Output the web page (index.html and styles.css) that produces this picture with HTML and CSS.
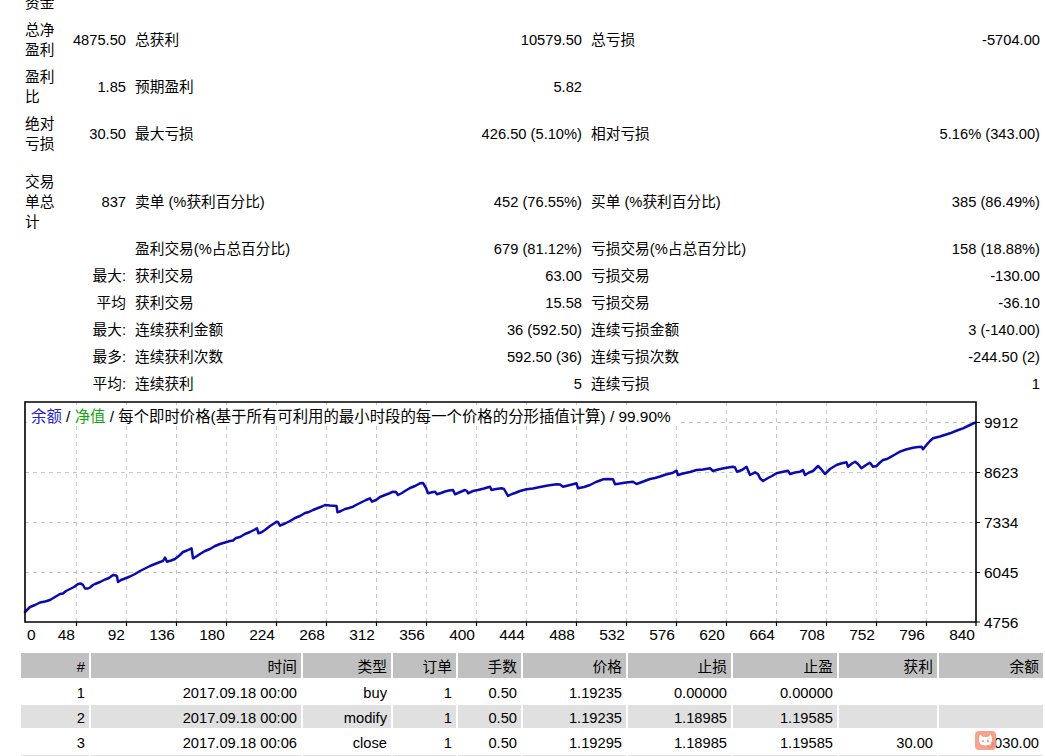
FILE: index.html
```html
<!DOCTYPE html>
<html lang="zh-CN">
<head>
<meta charset="utf-8">
<title>Strategy Tester Report</title>
<link rel="stylesheet" href="styles.css">
</head>
<body>
<table class="stats">
  <colgroup><col class="c1"><col class="c2"><col class="c3"><col class="c4"><col class="c5"><col class="c6"></colgroup>
  <tr><td>初始资金</td><td class="num">5000.00</td><td class="lbl"></td><td class="num"></td><td class="lbl"></td><td class="num"></td></tr>
  <tr><td>总净盈利</td><td class="num">4875.50</td><td class="lbl">总获利</td><td class="num">10579.50</td><td class="lbl">总亏损</td><td class="num">-5704.00</td></tr>
  <tr><td>盈利比</td><td class="num">1.85</td><td class="lbl">预期盈利</td><td class="num">5.82</td><td class="lbl"></td><td class="num"></td></tr>
  <tr><td>绝对亏损</td><td class="num">30.50</td><td class="lbl">最大亏损</td><td class="num">426.50 (5.10%)</td><td class="lbl">相对亏损</td><td class="num">5.16% (343.00)</td></tr>
  <tr class="spacer"><td colspan="6"></td></tr>
  <tr><td>交易单总计</td><td class="num">837</td><td class="lbl">卖单 (%获利百分比)</td><td class="num">452 (76.55%)</td><td class="lbl">买单 (%获利百分比)</td><td class="num">385 (86.49%)</td></tr>
  <tr><td></td><td class="num"></td><td class="lbl">盈利交易(%占总百分比)</td><td class="num">679 (81.12%)</td><td class="lbl">亏损交易(%占总百分比)</td><td class="num">158 (18.88%)</td></tr>
  <tr><td></td><td class="num">最大:</td><td class="lbl">获利交易</td><td class="num">63.00</td><td class="lbl">亏损交易</td><td class="num">-130.00</td></tr>
  <tr><td></td><td class="num">平均</td><td class="lbl">获利交易</td><td class="num">15.58</td><td class="lbl">亏损交易</td><td class="num">-36.10</td></tr>
  <tr><td></td><td class="num">最大:</td><td class="lbl">连续获利金额</td><td class="num">36 (592.50)</td><td class="lbl">连续亏损金额</td><td class="num">3 (-140.00)</td></tr>
  <tr><td></td><td class="num">最多:</td><td class="lbl">连续获利次数</td><td class="num">592.50 (36)</td><td class="lbl">连续亏损次数</td><td class="num">-244.50 (2)</td></tr>
  <tr><td></td><td class="num">平均:</td><td class="lbl">连续获利</td><td class="num">5</td><td class="lbl">连续亏损</td><td class="num">1</td></tr>
</table>

<svg class="chart" width="1024" height="254" viewBox="21 397 1024 254" xmlns="http://www.w3.org/2000/svg">
  <g class="grid">
    <path d="M76.5 402V622M126.5 402V622M176.5 402V622M226.5 402V622M276.5 402V622M326.5 402V622M376.5 402V622M426.5 402V622M476.5 402V622M526.5 402V622M576.5 402V622M626.5 402V622M676.5 402V622M726.5 402V622M776.5 402V622M826.5 402V622M876.5 402V622M926.5 402V622"/>
    <path d="M25 422.5H976M25 472.5H976M25 522.5H976M25 572.5H976"/>
  </g>
  <rect class="title-bg" x="27" y="405" width="650" height="19"/>
  <text class="title" x="31" y="422"><tspan class="t-bal">余额</tspan> / <tspan class="t-eq">净值</tspan> / 每个即时价格(基于所有可利用的最小时段的每一个价格的分形插值计算) / 99.90%</text>
  <polyline class="curve" points="25,612 28,609 30,607 35,605 40,602.5 45,601.5 50,600 55,597 60,594 63,593.5 66,591 70,589 74,587 78,584 81,583.5 83,585 85,588.5 88,588.5 90,587.5 93,585 95,584 100,582 105,579.5 109,578 113,575 116,575.5 117,576.5 118,582 121,580 125,578.5 130,576.5 135,574 140,571 145,568.5 150,566 155,564 160,562 163,561 165,557.5 167,561.7 171,560.5 175,559 180,555 183,552 187,550.5 191.5,548.3 193,558.3 197,556 200,554 205,551 210,549 215,546 220,544 225,542.5 230,541 233,540.5 236,538 240,537 245,534 250,532 254,530 257,528.3 258.5,533.3 262,532 265,530 270,526 274,523.5 276.5,521.7 278,522 280,525.7 285,523.5 290,521 295,518 300,516 305,513 309,512 313,510 318,508 322,506.5 325,505 330,505.5 336.5,506 337.5,512.3 341,511 345,509 349,508 353,506.7 358,504 362,502 366,500 370,498.3 372,501.7 376,500 380,497 385,495 389,493.5 393,491.7 396,492 398,495 402,493 405,491 410,488 415,486 420,483.3 423,483 426,488 428,493.3 431,492.5 435,491.7 437,494.3 441,493 445,491.5 449,490.5 453,490 455,494.3 459,492.5 465,490 467,491 468,493.3 473,491 478,490 484,488.5 490,486.7 491.5,490 496,489 501.5,488.3 504,489 508,496 512,494 515,493 520,491 526.5,489.3 533,488.5 540,487 548,485.5 556.5,484.3 560,484.5 563,486.7 568,485.5 572,484.5 576.5,483.3 578,488.3 584,487 590,485 596,482 600,480.5 603,479.3 608,479 613,479.3 615,484.3 620,483.5 626,482.5 633,481.7 636.5,484 642,482 650,479 655,478 660,476.5 666,474.5 673,472.7 676.5,470.7 678,475 683,473.5 690,472 696.5,470 703,469.5 710,468.3 713,471 718,469.5 725,468 733,466.7 735,467.5 737,471.7 742,470 746.5,466.7 750,475 755,472.3 758,474 760,478.3 763,481 768,478 772,476 776.5,473.3 782,472 788,470.7 790,474 795,472.5 800,471.7 803,470 805,475 809,472.5 813,471 816,468 818,466 821,469 825,474 830,469 836.5,465 841,463.5 846.5,462.3 848,466.7 852,463.5 855,461.7 858,464 861.5,468.3 866,465 870,462.7 873,466.7 876.5,466 880,462.5 883,460 887,459 890,457.3 895,454.5 900,451.7 906,449.5 913,447.7 918,447 921.5,446.7 923,449.3 926.5,445 930,441 933,438.3 940,436.5 950,433.3 957,430.5 963,428.3 970,425 975,422.7"/>
  <path class="frame" d="M25 402H976V622H25Z"/>
  <path class="ticks" d="M76.5 622V626M126.5 622V626M176.5 622V626M226.5 622V626M276.5 622V626M326.5 622V626M376.5 622V626M426.5 622V626M476.5 622V626M526.5 622V626M576.5 622V626M626.5 622V626M676.5 622V626M726.5 622V626M776.5 622V626M826.5 622V626M876.5 622V626M926.5 622V626M976 622V626M976 422.5H980M976 472.5H980M976 522.5H980M976 572.5H980M976 622H980"/>
  <g class="axis">
    <text x="984" y="428">9912</text>
    <text x="984" y="478">8623</text>
    <text x="984" y="528">7334</text>
    <text x="984" y="578">6045</text>
    <text x="984" y="628">4756</text>
  </g>
  <g class="axis xaxis">
    <text x="27" y="640" class="start">0</text>
    <text x="75" y="640">48</text>
    <text x="125" y="640">92</text>
    <text x="175" y="640">136</text>
    <text x="225" y="640">180</text>
    <text x="275" y="640">224</text>
    <text x="325" y="640">268</text>
    <text x="375" y="640">312</text>
    <text x="425" y="640">356</text>
    <text x="475" y="640">400</text>
    <text x="525" y="640">444</text>
    <text x="575" y="640">488</text>
    <text x="625" y="640">532</text>
    <text x="675" y="640">576</text>
    <text x="725" y="640">620</text>
    <text x="775" y="640">664</text>
    <text x="825" y="640">708</text>
    <text x="875" y="640">752</text>
    <text x="925" y="640">796</text>
    <text x="975" y="640">840</text>
  </g>
</svg>

<table class="trades">
  <colgroup>
    <col class="w1"><col class="w2"><col class="w3"><col class="w4"><col class="w4"><col class="w6"><col class="w6"><col class="w8"><col class="w9"><col class="w10">
  </colgroup>
  <tr class="head"><td>#</td><td>时间</td><td>类型</td><td>订单</td><td>手数</td><td>价格</td><td>止损</td><td>止盈</td><td>获利</td><td>余额</td></tr>
  <tr><td>1</td><td>2017.09.18 00:00</td><td>buy</td><td>1</td><td>0.50</td><td>1.19235</td><td>0.00000</td><td>0.00000</td><td></td><td></td></tr>
  <tr class="alt"><td>2</td><td>2017.09.18 00:00</td><td>modify</td><td>1</td><td>0.50</td><td>1.19235</td><td>1.18985</td><td>1.19585</td><td></td><td></td></tr>
  <tr><td>3</td><td>2017.09.18 00:06</td><td>close</td><td>1</td><td>0.50</td><td>1.19295</td><td>1.18985</td><td>1.19585</td><td>30.00</td><td>5030.00</td></tr>
  <tr class="alt"><td>4</td><td>2017.09.18 00:06</td><td>buy</td><td>2</td><td>0.50</td><td>1.19296</td><td>0.00000</td><td>0.00000</td><td></td><td></td></tr>
</table>

<div class="watermark" aria-hidden="true">
  <svg width="21" height="19" viewBox="0 0 21 19" xmlns="http://www.w3.org/2000/svg">
    <rect x="0" y="0" width="21" height="19" rx="4" fill="#f59a80"/>
    <path d="M4 7.5 L5 3.5 L8 6 H13 L16 3.5 L17 7.5 Q18 14 10.5 14.5 Q3 14 4 7.5Z" fill="#fff"/>
    <circle cx="8" cy="10" r="1.1" fill="#f59a80"/>
    <circle cx="13" cy="10" r="1.1" fill="#f59a80"/>
  </svg>
</div>
</body>
</html>
```
FILE: styles.css
```css
html, body {
  margin: 0;
  padding: 0;
  background: #ffffff;
}

body {
  font-family: "Liberation Sans", "Noto Sans CJK SC", sans-serif;
  font-size: 14.7px;
  color: #000000;
  overflow: hidden;
  width: 1045px;
  height: 756px;
}

/* ---------- summary table ---------- */
.stats {
  margin: -31px 0 0 21px;
  width: 1023px;
  table-layout: fixed;
  border-collapse: separate;
  border-spacing: 0;
}

.stats col.c1 { width: 39px; }
.stats col.c2 { width: 70px; }
.stats col.c3 { width: 270px; }
.stats col.c4 { width: 186px; }
.stats col.c5 { width: 264px; }
.stats col.c6 { width: 194px; }

.stats td {
  padding: 3.5px 4px;
  line-height: 20px;
  vertical-align: middle;
  text-align: left;
  white-space: normal;
}

.stats td.num {
  text-align: right;
  white-space: nowrap;
}

.stats td.lbl {
  padding-left: 5px;
  white-space: nowrap;
}

.stats tr.spacer td {
  height: 11px;
  padding: 0;
  line-height: 0;
}

/* ---------- chart ---------- */
.chart {
  display: block;
  margin-left: 21px;
  font-family: "Liberation Sans", "Noto Sans CJK SC", sans-serif;
}

.chart .grid path {
  fill: none;
  stroke: #c6c6c6;
  stroke-width: 1;
  stroke-dasharray: 4 4;
}

.chart .title-bg {
  fill: #ffffff;
}

.chart .title {
  font-size: 15.4px;
  fill: #000000;
}

.chart .t-bal { fill: #2424c4; }
.chart .t-eq { fill: #12a812; }

.chart .curve {
  fill: none;
  stroke: #0a0aae;
  stroke-width: 2.5;
  stroke-linejoin: round;
  stroke-linecap: round;
}

.chart .frame {
  fill: none;
  stroke: #000000;
  stroke-width: 1.6;
}

.chart .ticks {
  fill: none;
  stroke: #000000;
  stroke-width: 1.2;
}

.chart .axis text {
  font-size: 15.5px;
  fill: #000000;
}

.chart .xaxis text {
  text-anchor: end;
}

.chart .xaxis text.start {
  text-anchor: start;
}

/* ---------- trades table ---------- */
.trades {
  margin-left: 19px;
  width: 1026px;
  table-layout: fixed;
  border-collapse: separate;
  border-spacing: 2px;
}

.trades col.w1 { width: 68px; }
.trades col.w2 { width: 210px; }
.trades col.w3 { width: 88px; }
.trades col.w4 { width: 63px; }
.trades col.w6 { width: 103px; }
.trades col.w8 { width: 104px; }
.trades col.w9 { width: 98px; }
.trades col.w10 { width: 104px; }

.trades td {
  box-sizing: border-box;
  height: 23px;
  padding: 4.5px 4px 1.5px 4px;
  line-height: 17px;
  text-align: right;
  white-space: nowrap;
}

.trades tr.head td {
  height: 25px;
  padding: 5.5px 4px 2.5px 4px;
  background: #c0c0c0;
}

.trades tr.alt td {
  background: #e0e0e0;
}

/* ---------- watermark overlay ---------- */
.watermark {
  position: absolute;
  left: 975px;
  top: 731px;
  width: 21px;
  height: 19px;
  opacity: 0.9;
}

.watermark svg {
  display: block;
}
```
